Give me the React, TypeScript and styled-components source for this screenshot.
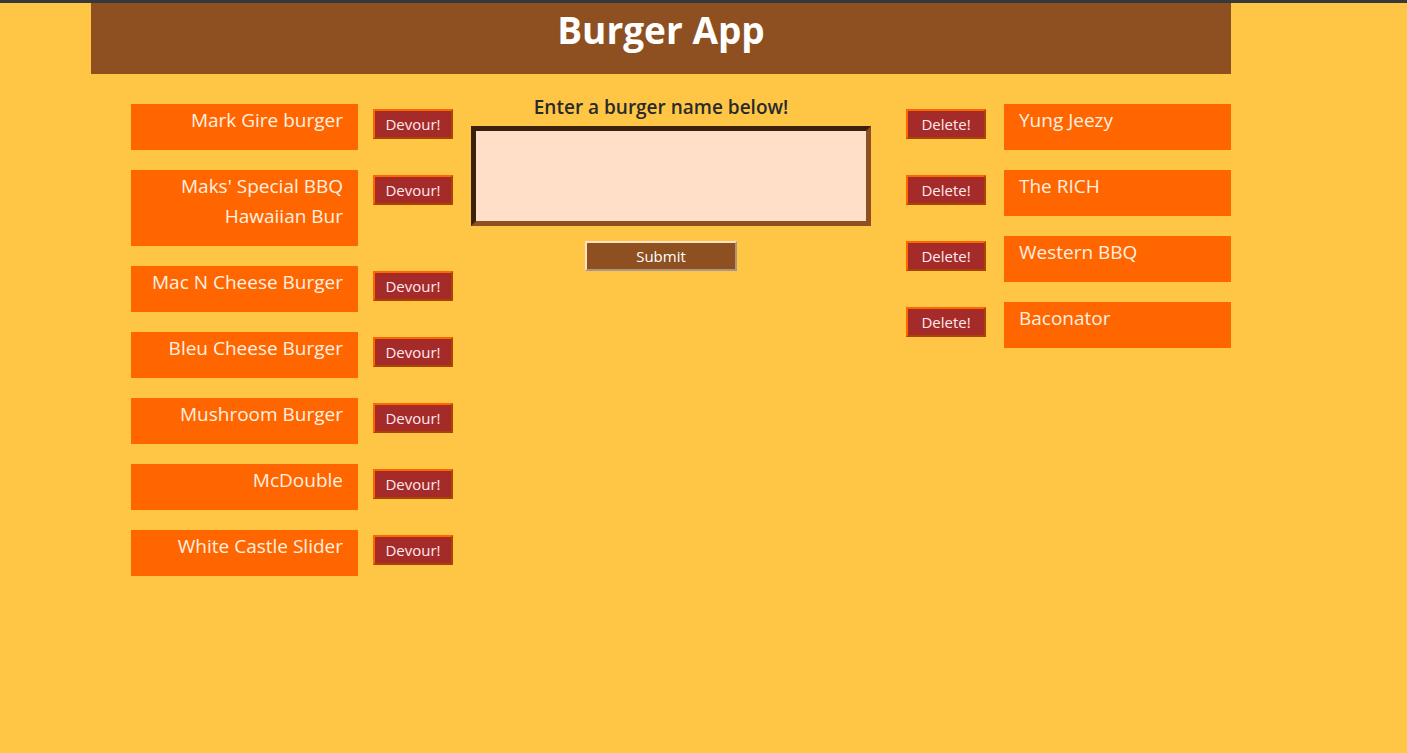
import React from "react";
import styled, { createGlobalStyle } from "styled-components";

const Global = createGlobalStyle`
  html, body { margin: 0; padding: 0; }
  body {
    background: #ffc646;
    border-top: 3px solid #38383a;
    min-height: 750px;
    font-family: "Open Sans", "Noto Sans", sans-serif;
  }
`;

const Container = styled.div`
  width: 1140px;
  margin-left: 91px;
`;

const Header = styled.header`
  background: #8e5020;
  height: 71px;
  display: flex;
  align-items: center;
  justify-content: center;
`;

const Title = styled.h1`
  margin: 0;
  color: #ffffff;
  font-size: 37px;
  font-weight: 700;
  line-height: 1;
  padding-bottom: 18px;
`;

const Row = styled.main`
  display: flex;
  align-items: flex-start;
`;

const Column = styled.section<{ $width: number; $ml: number; $pt: number }>`
  width: ${(p) => p.$width}px;
  margin-left: ${(p) => p.$ml}px;
  padding-top: ${(p) => p.$pt}px;
  display: flex;
  flex-direction: column;
  gap: 20px;
`;

const ItemRow = styled.div`
  display: flex;
  align-items: flex-start;
  gap: 15px;
`;

const RightRow = styled(ItemRow)`
  gap: 18px;
`;

const BurgerBox = styled.div<{ $align: "left" | "right" }>`
  width: 227px;
  box-sizing: border-box;
  background: #ff6600;
  color: #fff0e0;
  font-size: 19px;
  line-height: 30px;
  padding: 1px 15px 15px;
  text-align: ${(p) => p.$align};
  min-height: 46px;
`;

const ActionButton = styled.button`
  width: 80px;
  height: 30px;
  margin-top: 5px;
  box-sizing: border-box;
  background: #a52a2a;
  border: 2px outset #ff6600;
  color: #ffeaea;
  font-family: "Open Sans", "Noto Sans", sans-serif;
  font-size: 15px;
  padding: 0;
  flex-shrink: 0;
`;

const Middle = styled.section`
  width: 380px;
  margin-left: 18px;
  padding-top: 20px;
  display: flex;
  flex-direction: column;
  align-items: flex-start;
`;

const Prompt = styled.h3`
  width: 380px;
  margin: 0 0 6px;
  text-align: center;
  font-size: 19px;
  font-weight: 600;
  line-height: 26px;
  color: #2a2a2a;
`;

const NameInput = styled.textarea`
  width: 400px;
  height: 100px;
  box-sizing: border-box;
  background: #ffdfc7;
  border: 5px inset #8e5020;
  resize: none;
  margin: 0;
  display: block;
`;

const Submit = styled.button`
  align-self: flex-start;
  margin: 15px 0 0 114px;
  width: 152px;
  height: 30px;
  box-sizing: border-box;
  background: #8e5020;
  border: 2px outset #ffdfc7;
  color: #ffffff;
  font-family: "Open Sans", "Noto Sans", sans-serif;
  font-size: 15px;
  padding: 0;
`;

const toEat = [
  "Mark Gire burger",
  "Maks' Special BBQ Hawaiian Bur",
  "Mac N Cheese Burger",
  "Bleu Cheese Burger",
  "Mushroom Burger",
  "McDouble",
  "White Castle Slider",
];

const eaten = ["Yung Jeezy", "The RICH", "Western BBQ", "Baconator"];

export default function App() {
  return (
    <>
      <Global />
      <Container>
        <Header>
          <Title>Burger App</Title>
        </Header>
        <Row>
          <Column $width={322} $ml={40} $pt={30}>
            {toEat.map((b) => (
              <ItemRow key={b}>
                <BurgerBox $align="right">{b}</BurgerBox>
                <ActionButton>Devour!</ActionButton>
              </ItemRow>
            ))}
          </Column>
          <Middle>
            <Prompt>Enter a burger name below!</Prompt>
            <NameInput />
            <Submit>Submit</Submit>
          </Middle>
          <Column $width={325} $ml={55} $pt={30}>
            {eaten.map((b) => (
              <RightRow key={b}>
                <ActionButton>Delete!</ActionButton>
                <BurgerBox $align="left">{b}</BurgerBox>
              </RightRow>
            ))}
          </Column>
        </Row>
      </Container>
    </>
  );
}
